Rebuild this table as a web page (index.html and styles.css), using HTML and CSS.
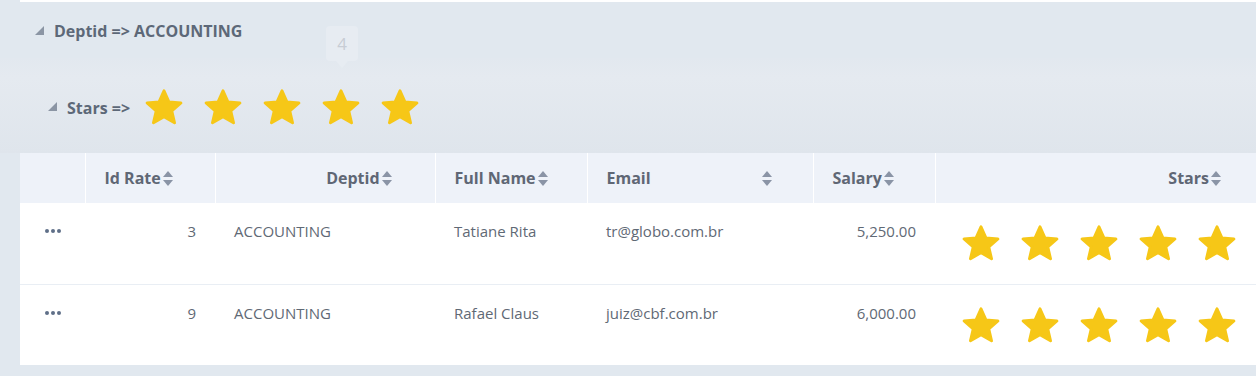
FILE: index.html
```html
<!DOCTYPE html>
<html>
<head>
<meta charset="utf-8">
<link rel="stylesheet" href="styles.css">
</head>
<body>
<svg width="0" height="0" class="defs">
  <defs>
    <symbol id="star" viewBox="1 1.2 22 20.6">
      <polygon points="12,2.6 14.7,8.7 21.3,9.3 16.3,13.7 17.8,20.2 12,16.8 6.2,20.2 7.7,13.7 2.7,9.3 9.3,8.7" fill="#f6c717" stroke="#f6c717" stroke-width="1.6" stroke-linejoin="round"/>
    </symbol>
  </defs>
</svg>
<div class="grid">
  <div class="topline"></div>
  <div class="group group-dept">
    <span class="tri"></span>
    <span class="group-label">Deptid =&gt; ACCOUNTING</span>
    <div class="tip">4</div>
  </div>
  <div class="group group-stars">
    <span class="tri"></span>
    <span class="group-label">Stars =&gt;</span>
    <div class="stars stars-group">
      <svg class="star"><use href="#star"/></svg>
      <svg class="star"><use href="#star"/></svg>
      <svg class="star"><use href="#star"/></svg>
      <svg class="star"><use href="#star"/></svg>
      <svg class="star"><use href="#star"/></svg>
    </div>
  </div>
  <table class="table">
    <colgroup>
      <col class="c-act"><col class="c-id"><col class="c-dept"><col class="c-name"><col class="c-email"><col class="c-sal"><col class="c-stars">
    </colgroup>
    <thead>
      <tr>
        <th></th>
        <th class="left"><span class="hd">Id Rate<i class="sort"></i></span></th>
        <th class="right th-dept"><span class="hd">Deptid<i class="sort"></i></span></th>
        <th class="left"><span class="hd">Full Name<i class="sort"></i></span></th>
        <th class="left"><span class="hd hd-wide">Email<i class="sort"></i></span></th>
        <th class="left"><span class="hd">Salary<i class="sort"></i></span></th>
        <th class="right th-stars"><span class="hd">Stars<i class="sort"></i></span></th>
      </tr>
    </thead>
    <tbody>
      <tr>
        <td class="act"><span class="dots"><i></i><i></i><i></i></span></td>
        <td class="right">3</td>
        <td>ACCOUNTING</td>
        <td>Tatiane Rita</td>
        <td>tr@globo.com.br</td>
        <td class="right">5,250.00</td>
        <td class="starcell"><div class="stars stars-row">
          <svg class="star"><use href="#star"/></svg>
          <svg class="star"><use href="#star"/></svg>
          <svg class="star"><use href="#star"/></svg>
          <svg class="star"><use href="#star"/></svg>
          <svg class="star"><use href="#star"/></svg>
        </div></td>
      </tr>
      <tr>
        <td class="act"><span class="dots"><i></i><i></i><i></i></span></td>
        <td class="right">9</td>
        <td>ACCOUNTING</td>
        <td>Rafael Claus</td>
        <td>juiz@cbf.com.br</td>
        <td class="right">6,000.00</td>
        <td class="starcell"><div class="stars stars-row">
          <svg class="star"><use href="#star"/></svg>
          <svg class="star"><use href="#star"/></svg>
          <svg class="star"><use href="#star"/></svg>
          <svg class="star"><use href="#star"/></svg>
          <svg class="star"><use href="#star"/></svg>
        </div></td>
      </tr>
    </tbody>
  </table>
</div>
</body>
</html>
```
FILE: styles.css
```css
html, body {
  margin: 0;
  padding: 0;
}
body {
  background: #e1e8ef;
  font-family: "Open Sans", "Noto Sans", sans-serif;
  font-size: 15px;
  color: #5f6975;
  width: 1256px;
  height: 376px;
  overflow: hidden;
}
.defs {
  position: absolute;
  width: 0;
  height: 0;
}
.grid {
  padding-left: 20px;
}
.topline {
  height: 2px;
  background: #ffffff;
}
.group {
  display: flex;
  align-items: center;
  color: #5d6878;
  font-weight: 700;
  font-size: 16px;
}
.group-dept {
  position: relative;
  height: 54px;
  padding-top: 2px;
  padding-left: 15px;
}
.group-stars {
  height: 91px;
  padding-top: 4px;
  margin-left: -20px;
  padding-left: 48px;
  background: linear-gradient(to bottom, #e2e8ef 0%, #e5eaf0 20%, #dfe5ec 100%);
}
.tri {
  width: 0;
  height: 0;
  border-left: 9px solid transparent;
  border-bottom: 9px solid #8b95a4;
  margin-right: 10px;
  margin-top: -2px;
}
.tip {
  position: absolute;
  left: 306px;
  top: 24px;
  width: 32px;
  height: 35px;
  border-radius: 4px;
  background: #e7ecf2;
  color: #c8cdd5;
  font-weight: 400;
  font-size: 17px;
  display: flex;
  align-items: center;
  justify-content: center;
}
.tip::after {
  content: "";
  position: absolute;
  left: 10px;
  bottom: -7px;
  border-left: 6px solid transparent;
  border-right: 6px solid transparent;
  border-top: 7px solid #e7ecf2;
}
.stars {
  display: flex;
}
.stars-group {
  margin-left: 14px;
  gap: 19px;
  margin-top: -2px;
}
.star {
  width: 40px;
  height: 38px;
  display: block;
}
.table {
  width: 1236px;
  border-collapse: collapse;
  table-layout: fixed;
}
.c-act { width: 65px; }
.c-id { width: 130px; }
.c-dept { width: 220px; }
.c-name { width: 152px; }
.c-email { width: 226px; }
.c-sal { width: 122px; }
.c-stars { width: 321px; }
thead tr {
  background: #eef2f9;
  height: 50px;
}
th {
  padding: 0 19px;
  font-weight: 700;
  font-size: 16px;
  color: #5f6775;
  border-left: 1px solid #ffffff;
  white-space: nowrap;
}
th:first-child {
  border-left: none;
}
th.left { text-align: left; }
th.right { text-align: right; }
th.th-dept { padding-right: 42px; }
th.th-stars { padding-right: 34px; }
.hd {
  display: inline-flex;
  align-items: center;
}
.hd-wide {
  width: 166px;
  justify-content: space-between;
}
.sort {
  display: inline-block;
  position: relative;
  width: 11px;
  height: 15px;
  margin-left: 2px;
}
.sort::before,
.sort::after {
  content: "";
  position: absolute;
  left: 0;
  border-left: 5.5px solid transparent;
  border-right: 5.5px solid transparent;
}
.sort::before {
  top: 0;
  border-bottom: 6px solid #8a94a6;
}
.sort::after {
  bottom: 0;
  border-top: 6px solid #8a94a6;
}
tbody tr {
  background: #ffffff;
  height: 81px;
}
tbody tr + tr {
  border-top: 1px solid #e9eef4;
}
td {
  vertical-align: top;
  padding: 18px 19px 0 19px;
  line-height: 20px;
  color: #5f6975;
  white-space: nowrap;
}
td.right { text-align: right; }
td.act { padding-left: 25px; }
.dots {
  display: inline-flex;
  gap: 2px;
  margin-top: 8px;
  vertical-align: top;
}
.dots i {
  width: 4px;
  height: 4px;
  border-radius: 50%;
  background: #5f6f88;
}
td.starcell {
  padding: 21px 0 0 26px;
}
.stars-row {
  gap: 19px;
}
```
